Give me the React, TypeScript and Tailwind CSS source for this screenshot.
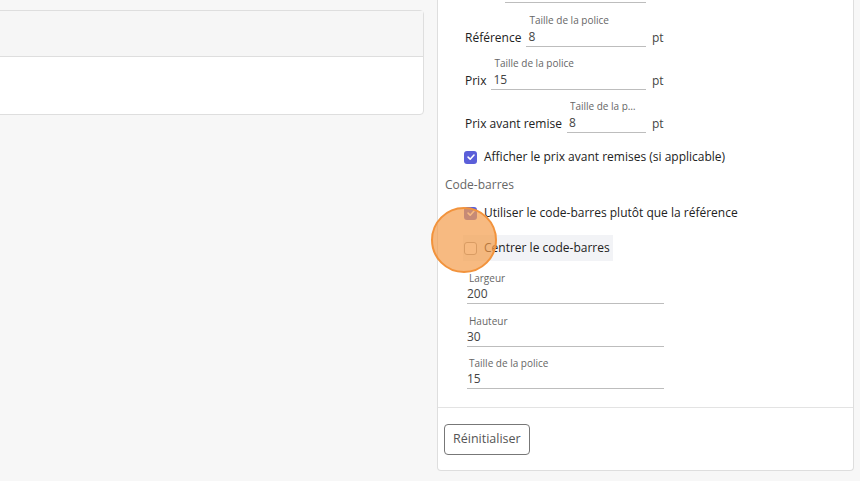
import React from "react";

const fontRows = [
  { label: "Référence", value: "8" },
  { label: "Prix", value: "15" },
  { label: "Prix avant remise", value: "8" },
];

const barcodeFields = [
  { label: "Largeur", value: "200" },
  { label: "Hauteur", value: "30" },
  { label: "Taille de la police", value: "15" },
];

function Check({ checked }: { checked: boolean }) {
  if (checked) {
    return (
      <span className="flex h-[13px] w-[13px] shrink-0 items-center justify-center rounded-[3px] bg-[#5b5fd9]">
        <svg viewBox="0 0 12 12" className="h-[10px] w-[10px]" fill="none">
          <path d="M2.5 6.2 5 8.6 9.6 3.6" stroke="white" strokeWidth="1.9" strokeLinecap="round" strokeLinejoin="round" />
        </svg>
      </span>
    );
  }
  return <span className="h-[13px] w-[13px] shrink-0 rounded-[3px] border border-[#9a9a9a] bg-white" />;
}

export default function App() {
  return (
    <div
      className="flex min-h-screen items-start gap-[13px] overflow-hidden bg-[#f7f7f7] pr-[6px] text-[12px] text-[#222]"
      style={{ fontFamily: '"Open Sans", "Noto Sans", sans-serif' }}
    >
      {/* left card */}
      <div className="-ml-[10px] mt-[10px] w-[434px] shrink-0 rounded-r-[4px] border border-[#dedede] bg-white">
        <div className="h-[46px] border-b border-[#dedede] bg-[#f6f6f6]" />
        <div className="h-[57px]" />
      </div>

      {/* right card */}
      <div className="-mt-[2px] flex-1 rounded-b-[4px] border border-t-0 border-[#dedede] bg-white">
        <div className="px-[7px]">
          {/* tail of the row above, scrolled out of view */}
          <div className="ml-[20px] flex items-end">
            <div className="ml-[40px] w-[141px] border-b border-[#bdbdbd] pt-[4px]" />
          </div>

          <div className="flex flex-col pl-[20px] pt-[3px]">
            {fontRows.map((r) => (
              <div key={r.label} className="flex h-[43px] items-end pb-[2px]">
                <div className="flex w-[181px] items-end">
                  <span className="mr-[5px] shrink-0 leading-[18px]">{r.label}</span>
                  <div className="relative min-w-0 flex-1 border-b border-[#bdbdbd]">
                    <span className="absolute -top-[14px] left-[3px] max-w-[calc(100%-9px)] truncate text-[10px] leading-[12px] text-[#666]">
                      Taille de la police
                    </span>
                    <span className="block pl-[2px] leading-[18px] text-[#444]">{r.value}</span>
                  </div>
                </div>
                <span className="ml-[6px] leading-[18px] text-[#444]">pt</span>
              </div>
            ))}
          </div>

          <div className="mt-[13px] flex items-center gap-[7px] pl-[19px] leading-[18px]">
            <Check checked />
            <span>Afficher le prix avant remises (si applicable)</span>
          </div>

          <div className="mt-[10px] leading-[18px] text-[#666]">Code-barres</div>

          <div className="mt-[10px] flex items-center gap-[7px] pl-[19px] leading-[18px]">
            <Check checked />
            <span>Utiliser le code-barres plutôt que la référence</span>
          </div>

          <div className="ml-[18px] mt-[13px] flex h-[26px] w-fit items-center gap-[7px] bg-[#f2f3f6] pl-px pr-[3px]">
            <Check checked={false} />
            <span>Centrer le code-barres</span>
          </div>

          <div className="mt-[11px] flex flex-col gap-[10.5px] pl-[22px]">
            {barcodeFields.map((f) => (
              <div key={f.label} className="w-[197px] border-b border-[#bdbdbd]">
                <div className="pl-[2px] text-[10px] leading-[12px] text-[#666]">{f.label}</div>
                <div className="leading-[19px] text-[#444]">{f.value}</div>
              </div>
            ))}
          </div>
        </div>

        <div className="mt-[18px] border-t border-[#e3e3e3] px-[6px] pb-[15px] pt-[16px]">
          <button className="h-[31px] rounded-[4px] border border-[#777] bg-white px-[8px] text-[12.5px] text-[#555]">
            Réinitialiser
          </button>
        </div>
      </div>

      {/* pointer highlight */}
      <div className="pointer-events-none absolute left-[431px] top-[207px] h-[66px] w-[66px] rounded-full border-2 border-[#f2933c] bg-[#f39c4c]/70" />
    </div>
  );
}
